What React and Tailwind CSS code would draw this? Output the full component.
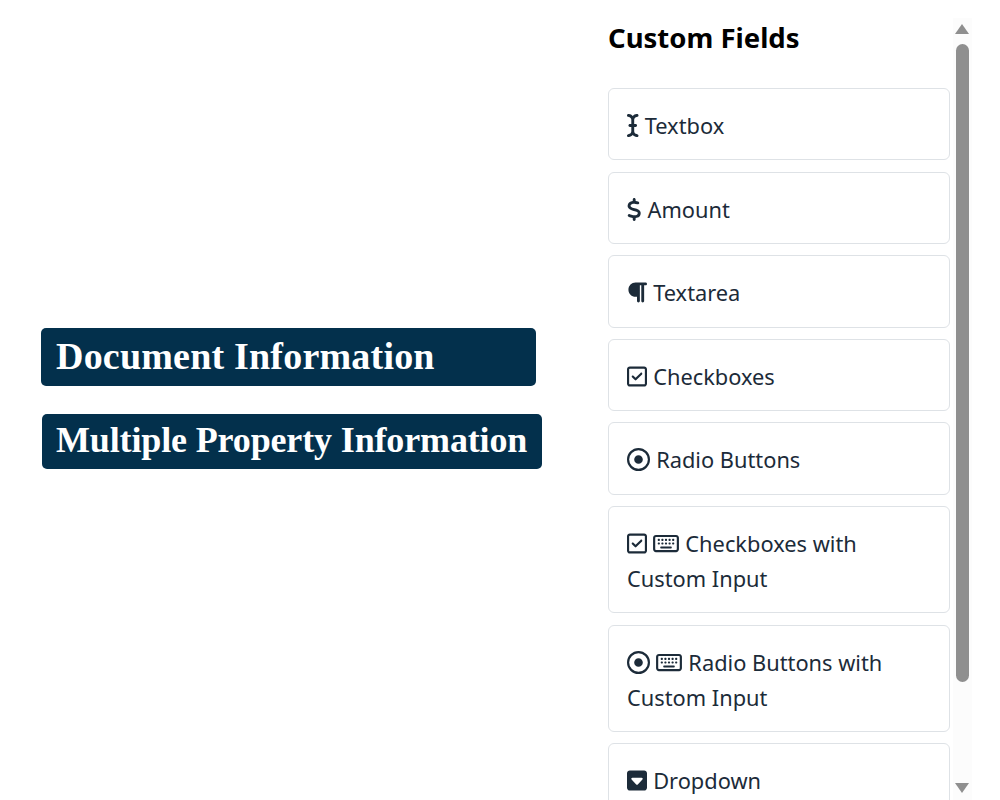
import { FaICursor, FaDollarSign, FaParagraph, FaRegSquareCheck, FaRegCircleDot, FaRegKeyboard, FaSquareCaretDown } from "react-icons/fa6";

const cursor = { Icon: FaICursor, width: "w-[11.5px]" };
const dollar = { Icon: FaDollarSign, width: "w-[14.4px]" };
const paragraph = { Icon: FaParagraph, width: "w-[20px]" };
const check = { Icon: FaRegSquareCheck, width: "w-[20px]" };
const radio = { Icon: FaRegCircleDot, width: "w-[23px]" };
const keyboard = { Icon: FaRegKeyboard, width: "w-[26px]" };
const caret = { Icon: FaSquareCaretDown, width: "w-[20px]" };

const fields = [
  { label: "Textbox", icons: [cursor] },
  { label: "Amount", icons: [dollar] },
  { label: "Textarea", icons: [paragraph] },
  { label: "Checkboxes", icons: [check] },
  { label: "Radio Buttons", icons: [radio] },
  { label: "Checkboxes with Custom Input", icons: [check, keyboard] },
  { label: "Radio Buttons with Custom Input", icons: [radio, keyboard] },
  { label: "Dropdown", icons: [caret] },
];

const FieldCard = ({ field }) => {
  return (
    <div className="shrink-0 mb-[11.2px] border border-[#dee2e6] rounded-md bg-white px-[18px] pt-[19px] pb-[16.2px] text-[21.8px] leading-[35.2px] text-[#1c2b39]">
      {field.icons.map(({ Icon, width }, i) => (
        <span key={i}>
          <Icon className={`inline-block h-[23px] align-[-3px] mr-[0.5px] ${width}`} />{" "}
        </span>
      ))}
      {field.label}
    </div>
  );
};

const Banner = ({ children, className }) => {
  return (
    <div className={`bg-[#03304c] rounded-[5px] text-white whitespace-nowrap font-['Liberation_Serif',serif] font-bold ${className}`}>
      {children}
    </div>
  );
};

export default function App() {
  return (
    <div className="flex h-[800px] w-[1000px] overflow-hidden bg-white font-['Noto_Sans',sans-serif]">
      <div className="w-[600px] shrink-0 flex flex-col justify-center pl-[41px] pb-[3px]">
        <Banner className="w-[495px] h-[58px] text-[38px] tracking-[0.2px] leading-[56px] pl-[15px] mb-[28px]">Document Information</Banner>
        <Banner className="w-[500px] h-[55px] text-[36px] tracking-[-0.14px] leading-[53px] pl-[14px] ml-px">Multiple Property Information</Banner>
      </div>

      <div className="w-[353px] shrink-0 pl-[8px] pr-[3px] flex flex-col">
        <h2 className="shrink-0 mt-[18px] mb-[30px] h-[40px] text-[27.5px] leading-[40px] font-bold text-black">Custom Fields</h2>
        {fields.map((field) => (
          <FieldCard key={field.label} field={field} />
        ))}
      </div>

      <div className="w-[19px] h-[782px] mt-[18px] bg-[#fcfcfc] flex flex-col items-center pt-[6px] pb-[7px] pr-px shrink-0">
        <div className="w-0 h-0 border-x-[7px] border-x-transparent border-b-[10px] border-b-[#8f8f8f]" />
        <div className="w-[13px] h-[638px] mt-[10px] rounded-full bg-[#8f8f8f]" />
        <div className="mt-auto w-0 h-0 border-x-[7px] border-x-transparent border-t-[10px] border-t-[#8f8f8f]" />
      </div>
      <div className="flex-1" />
    </div>
  );
}
